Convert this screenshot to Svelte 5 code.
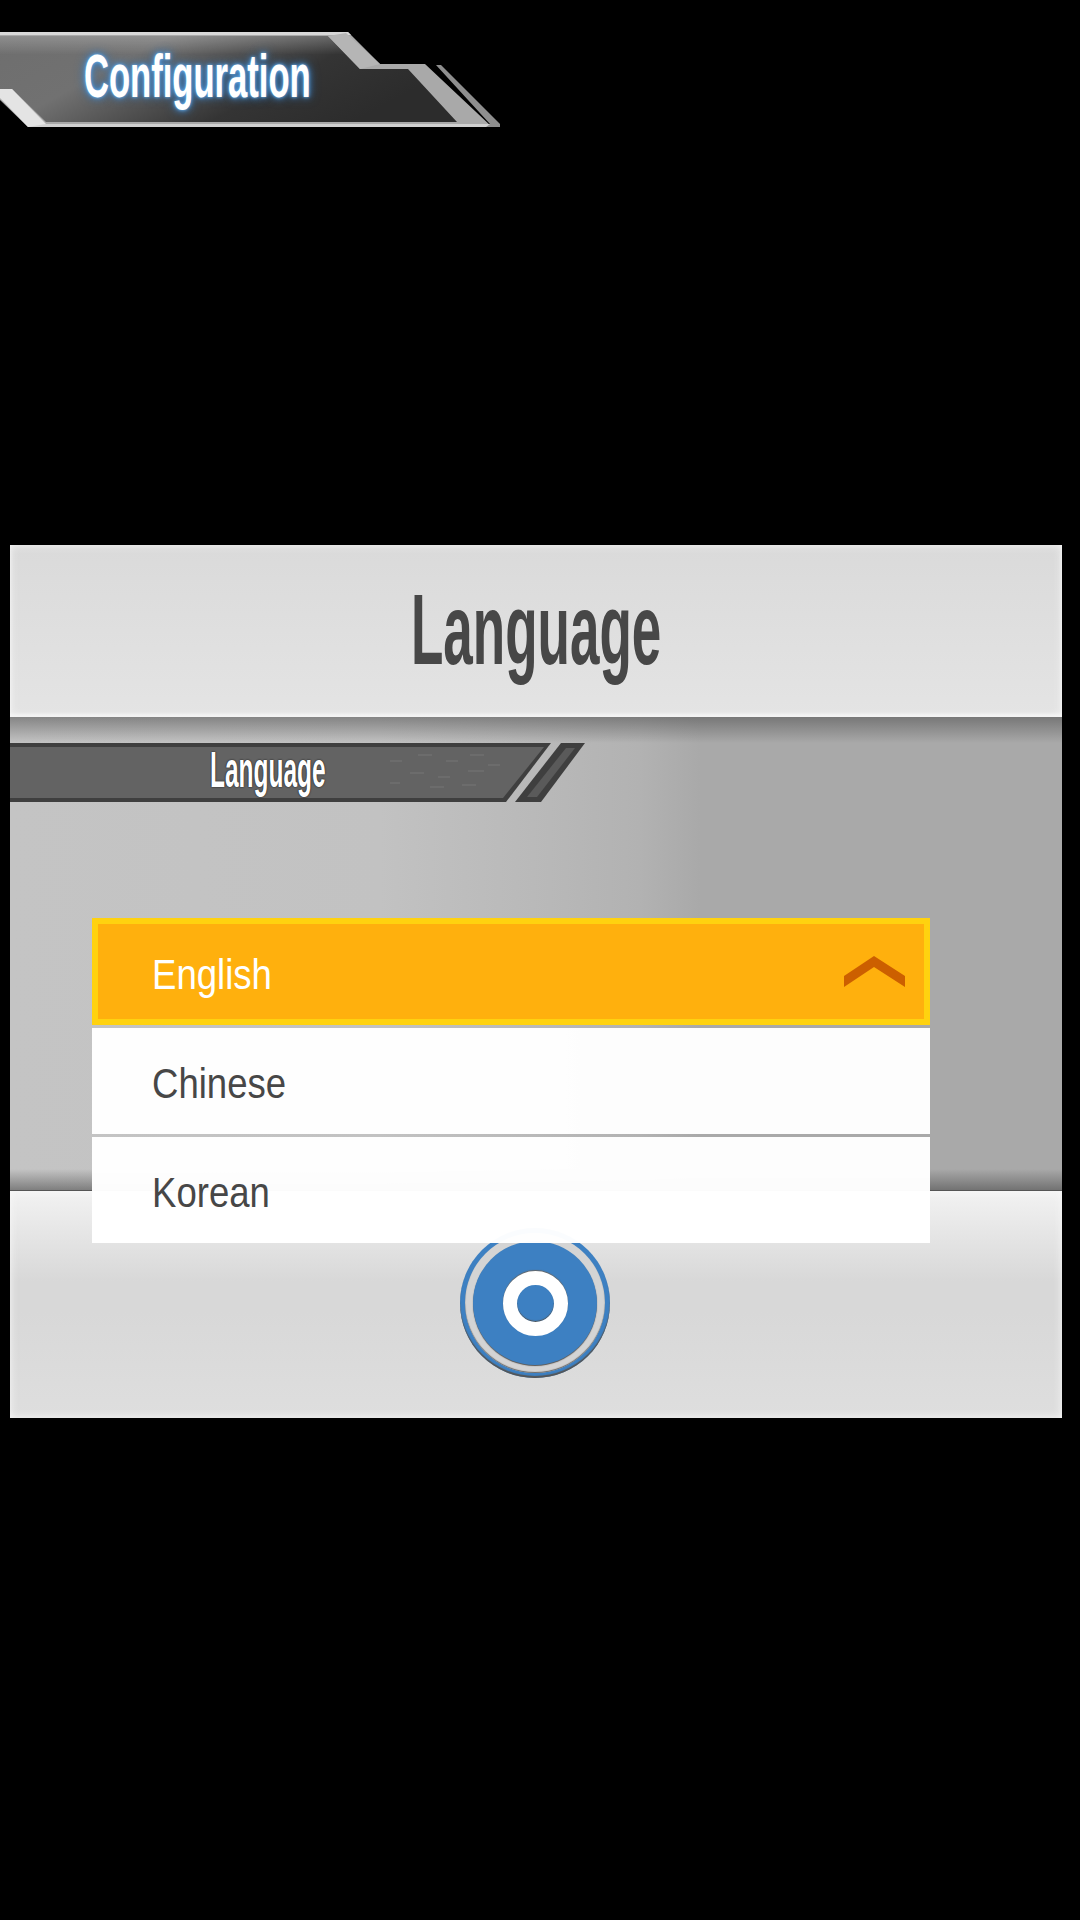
<script>
  const languages = [
    { label: 'English', selected: true },
    { label: 'Chinese', selected: false },
    { label: 'Korean', selected: false }
  ];
</script>

<div class="screen">
  <div class="title-bar">
    <svg class="title-art" viewBox="0 0 510 140" aria-hidden="true">
      <defs>
        <linearGradient id="plate" x1="0" y1="0" x2="1" y2="0.35">
          <stop offset="0" stop-color="#6e6e6e" />
          <stop offset="0.33" stop-color="#717171" />
          <stop offset="0.5" stop-color="#565656" />
          <stop offset="0.72" stop-color="#343434" />
          <stop offset="1" stop-color="#2c2c2c" />
        </linearGradient>
        <linearGradient id="sheen" x1="0" y1="0" x2="0" y2="1">
          <stop offset="0" stop-color="#ffffff" stop-opacity="0.22" />
          <stop offset="0.55" stop-color="#ffffff" stop-opacity="0" />
        </linearGradient>
      </defs>
      <polygon points="0,32 348,32 380,64 425,64 492,127 28,127 0,100" fill="#a9a9a9" />
      <polygon points="0,36 328,36 360,69 408,69 457,122 46,122 12,89 0,89" fill="url(#plate)" />
      <polygon points="0,36 328,36 360,69 200,69 100,60 0,70" fill="url(#sheen)" />
      <polygon points="0,32 348,32 351,35 0,35" fill="#d8d8d8" />
      <polygon points="28,124 490,124 493,127 28,127" fill="#d0d0d0" />
      <polygon points="0,89 12,89 46,124 28,127 0,98" fill="#e4e4e4" />
      <polygon points="328,36 346,33 380,64 360,69" fill="#b5b5b5" />
      <polygon points="436,65 441,65 500,124 500,127 486,127 490,124" fill="#8e8e8e" />
    </svg>
    <span class="title-text">Configuration</span>
  </div>

  <section class="panel">
    <header class="panel-head">
      <h1>Language</h1>
    </header>

    <div class="panel-body">
      <div class="section-tag">
        <svg class="tag-art" viewBox="0 0 576 60" aria-hidden="true">
          <polygon points="0,0 541,0 496,59 0,59" fill="#3f3f3f" />
          <polygon points="0,4 534,4 493,55 0,55" fill="#636363" />
          <polygon points="551,0 575,0 531,59 505,59" fill="#3f3f3f" />
          <polygon points="556,5 565,5 527,54 517,54" fill="#5a5a5a" />
          <g stroke="#767676" stroke-width="1">
            <path d="M380 18h12M408 12h14M436 18h12M460 12h14M478 22h12M400 30h14M428 34h12M458 28h16M380 40h10M420 44h14M452 42h14" />
          </g>
        </svg>
        <span class="tag-text">Language</span>
      </div>
    </div>

    <footer class="panel-foot">
      <button class="ok" aria-label="OK">
        <span class="ok-ring"></span>
      </button>
    </footer>

    <ul class="lang-list">
      {#each languages as lang}
        <li class="lang" class:selected={lang.selected}>
          <span class="lang-label">{lang.label}</span>
          {#if lang.selected}
            <svg class="chevron" viewBox="0 0 61 31" aria-hidden="true">
              <polygon points="0,20 30,0 61,20 61,31 30,11 0,31" fill="#cc5f00" />
            </svg>
          {/if}
        </li>
      {/each}
    </ul>
  </section>
</div>

<style>
  :global(body) {
    margin: 0;
    background: #000;
  }

  .screen {
    width: 1080px;
    height: 1920px;
    background: #000;
    overflow: hidden;
    font-family: 'Liberation Sans', Arial, sans-serif;
  }

  .title-bar {
    position: relative;
    height: 140px;
    margin-bottom: 405px;
  }

  .title-art {
    position: absolute;
    inset: 0;
    width: 510px;
    height: 140px;
  }

  .title-text {
    position: absolute;
    left: 84px;
    top: 43px;
    font-size: 61px;
    font-weight: 700;
    line-height: 66px;
    color: #fff;
    transform: scaleX(0.567);
    transform-origin: left center;
    text-shadow: 0 0 4px #6fb6f0, 0 0 9px #4b94d8, 0 0 14px #2f6fb0;
    white-space: nowrap;
  }

  .panel {
    position: relative;
    width: 1052px;
    margin-left: 10px;
  }

  .panel-head {
    height: 172px;
    box-sizing: border-box;
    display: flex;
    align-items: center;
    justify-content: center;
    background: linear-gradient(#dadada, #e4e4e4);
    box-shadow: inset 0 0 8px #f6f6f6, inset 0 -3px 3px #f2f2f2;
  }

  .panel-head h1 {
    margin: -4px 0 0;
    font-size: 100px;
    font-weight: 700;
    line-height: 110px;
    color: #474747;
    transform: scaleX(0.53);
  }

  .panel-body {
    height: 473px;
    box-sizing: border-box;
    padding-top: 26px;
    background:
      linear-gradient(rgba(70, 70, 70, 0.5), rgba(70, 70, 70, 0) 26px),
      linear-gradient(rgba(70, 70, 70, 0) 452px, rgba(70, 70, 70, 0.55)),
      linear-gradient(90deg, #c4c4c4 0, #c2c2c2 370px, #b8b8b8 540px, #b2b2b2 630px, #a9a9a9 690px, #a9a9a9 100%);
  }

  .section-tag {
    position: relative;
    width: 576px;
    height: 60px;
  }

  .tag-art {
    display: block;
    width: 576px;
    height: 60px;
  }

  .tag-text {
    position: absolute;
    left: 200px;
    top: 0;
    font-size: 50px;
    font-weight: 700;
    line-height: 54px;
    color: #fff;
    transform: scaleX(0.49);
    transform-origin: left center;
    text-shadow: 0 0 2px #222, 0 0 2px #222;
    white-space: nowrap;
  }

  .panel-foot {
    height: 228px;
    box-sizing: border-box;
    padding-top: 37px;
    display: flex;
    justify-content: center;
    border-top: 1px solid #555;
    background: linear-gradient(#f2f2f2, #d8d8d8 90px, #d8d8d8 120px, #dedede);
    box-shadow: inset 0 0 8px #f8f8f8;
  }

  .ok {
    width: 150px;
    height: 150px;
    padding: 0;
    border: 0;
    border-radius: 50%;
    display: flex;
    align-items: center;
    justify-content: center;
    background: #3d80c2;
    box-shadow: inset 0 -2px 1px #555;
    position: relative;
    margin-left: -2px;
  }

  .ok::before {
    content: '';
    position: absolute;
    inset: 5px;
    border-radius: 50%;
    background: #d4d4d4;
    box-shadow: inset 0 -1px 1px #666;
  }

  .ok::after {
    content: '';
    position: absolute;
    inset: 13px;
    border-radius: 50%;
    background: #3d80c2;
    box-shadow: 0 1px 1px #555;
  }

  .ok-ring {
    position: relative;
    z-index: 1;
    flex: none;
    width: 37px;
    height: 37px;
    border: 14px solid #fff;
    border-radius: 50%;
    background: #3d80c2;
    box-shadow: 0 -1px 1px #666, inset 0 -1px 1px #555;
  }

  .lang-list {
    position: absolute;
    left: 82px;
    top: 373px;
    width: 838px;
    margin: 0;
    padding: 0;
    list-style: none;
    display: flex;
    flex-direction: column;
    gap: 3px;
  }

  .lang {
    height: 106px;
    box-sizing: border-box;
    padding-left: 60px;
    padding-top: 4px;
    display: flex;
    align-items: center;
    justify-content: space-between;
    font-size: 43px;
    color: #474747;
    background: rgba(255, 255, 255, 0.975);
  }

  .lang-label {
    transform: scaleX(0.85);
    transform-origin: left center;
  }

  .lang.selected {
    height: 107px;
    border: 6px solid #ffd20f;
    padding-left: 54px;
    padding-top: 0;
    padding-right: 19px;
    color: #fff;
    background: #ffb00d;
  }

  .lang.selected .lang-label {
    position: relative;
    top: 3px;
  }

  .chevron {
    width: 61px;
    height: 31px;
  }
</style>
